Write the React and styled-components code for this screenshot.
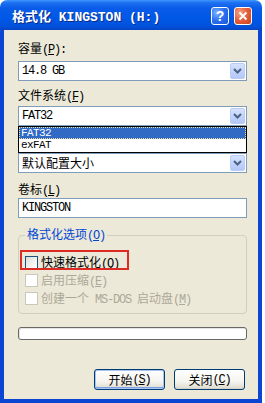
import React from "react";
import styled, { createGlobalStyle } from "styled-components";

const CJK = `"Noto Sans CJK SC", "Liberation Sans", sans-serif`;
const MONO = `"Liberation Mono", "Noto Sans CJK SC", monospace`;

const GlobalStyle = createGlobalStyle`
  html, body { margin: 0; padding: 0; background: #fff; }
  body { font-family: ${CJK}; font-size: 12px; }
`;

const Window = styled.div`
  width: 262px;
  display: flex;
  flex-direction: column;
`;

const TitleBar = styled.div`
  height: 30px;
  box-sizing: border-box;
  display: flex;
  align-items: center;
  padding: 1px 10px 0 12px;
  border-radius: 7px 7px 0 0;
  background: linear-gradient(
    180deg,
    #3d95ff 0px,
    #1d6ff0 3px,
    #0a5ce8 8px,
    #0058e6 18px,
    #0052dc 26px,
    #0843c4 30px
  );
`;

const Title = styled.div`
  flex: 1;
  color: #fff;
  font-family: ${MONO};
  font-size: 13px;
  font-weight: bold;
  white-space: pre;
  text-shadow: 1px 1px 0 #0c2a86;
`;

const TitleButton = styled.div`
  width: 18px;
  height: 18px;
  box-sizing: border-box;
  margin-left: ${({ $gap }) => $gap || 0}px;
  border: 1px solid #fff;
  border-radius: 3px;
  display: flex;
  align-items: center;
  justify-content: center;
  color: #fff;
  font-family: "Liberation Sans", sans-serif;
  font-weight: bold;
  font-size: 14px;
  background: ${({ $close }) =>
    $close
      ? "radial-gradient(circle at 30% 30%, #f2a58a 0%, #e6623c 45%, #c9401c 100%)"
      : "radial-gradient(circle at 30% 30%, #7fb2ff 0%, #2a6ff0 50%, #1a55d8 100%)"};
`;

const Body = styled.div`
  background: #ece9d8;
  border: 4px solid #0b45d4;
  border-top: none;
  padding: 11px 11px 9px 14px;
  display: flex;
  flex-direction: column;
`;

const Label = styled.div`
  margin-top: ${({ $mt }) => $mt || 0}px;
  line-height: 14px;
  height: 14px;
  color: #000;
  font-size: 12px;
  white-space: pre;
`;

const Mono = styled.span`
  font-family: ${MONO};
  font-size: 12px;
  letter-spacing: -1.2px;
  white-space: pre;
`;

const Key = styled.span`
  text-decoration: underline;
`;

const Hot = ({ k, tail = "" }) => (
  <Mono>
    (<Key>{k}</Key>){tail}
  </Mono>
);

const Field = styled.div`
  position: relative;
  margin-top: ${({ $mt }) => $mt || 0}px;
  height: 20px;
  box-sizing: border-box;
  border: 1px solid #7f9db9;
  background: #fff;
  display: flex;
  align-items: center;
  padding-left: 3px;
`;

const FieldText = styled.div`
  flex: 1;
  font-family: ${({ $mono }) => ($mono ? MONO : CJK)};
  font-size: 12px;
  letter-spacing: ${({ $mono }) => ($mono ? "-1.2px" : "0")};
  white-space: pre;
  color: #000;
  line-height: 18px;
`;

const ArrowButton = styled.div`
  width: 15px;
  height: 16px;
  margin-right: 1px;
  box-sizing: border-box;
  border: 1px solid #b9cbf6;
  border-radius: 2px;
  background: linear-gradient(180deg, #d6e2fd 0%, #c3d4fb 50%, #b4c8f8 100%);
  display: flex;
  align-items: center;
  justify-content: center;
`;

const List = styled.div`
  position: absolute;
  top: calc(100% + 1px);
  left: -1px;
  right: -1px;
  z-index: 2;
  border: 1px solid #000;
  background: #fff;
`;

const ListItem = styled.div`
  height: ${({ $h }) => $h || 12}px;
  line-height: ${({ $h }) => $h || 12}px;
  padding-left: 2px;
  font-family: ${MONO};
  font-size: 11px;
  letter-spacing: -0.6px;
  color: ${({ $selected }) => ($selected ? "#fff" : "#000")};
  background: ${({ $selected }) => ($selected ? "#316ac5" : "#fff")};
  outline: ${({ $selected }) => ($selected ? "1px dotted #e8e0a0" : "none")};
  outline-offset: -1px;
`;

const Group = styled.fieldset`
  margin: 9px 0 0;
  padding: 10px 0 6px 6px;
  border: 1px solid #d0d0bf;
  border-radius: 4px;
  min-width: 0;
`;

const Legend = styled.legend`
  padding: 0 2px;
  line-height: 14px;
  font-size: 12px;
  color: #0046d5;
`;

const Rows = styled.div`
  display: flex;
  flex-direction: column;
`;

const CheckRow = styled.div`
  position: relative;
  display: ${({ $highlight }) => ($highlight ? "inline-flex" : "flex")};
  align-self: flex-start;
  align-items: center;
  gap: 3px;
  height: 18px;
  font-size: 12px;
  color: ${({ $disabled }) => ($disabled ? "#aca899" : "#000")};

  ${({ $highlight }) =>
    $highlight &&
    `
    &::after {
      content: "";
      position: absolute;
      top: -3px;
      bottom: 1px;
      left: -5px;
      right: -10px;
      border: 2px solid #dd2a22;
    }
  `}
`;

const Checkbox = styled.div`
  width: 13px;
  height: 13px;
  box-sizing: border-box;
  border: 1px solid ${({ $disabled }) => ($disabled ? "#cac8bb" : "#1c5180")};
  background: ${({ $disabled }) =>
    $disabled ? "#fff" : "linear-gradient(135deg, #dcdcd7 0%, #f4f4f0 60%, #fff 100%)"};
`;

const Progress = styled.div`
  margin-top: 13px;
  height: 13px;
  box-sizing: border-box;
  border: 1px solid #686868;
  border-radius: 3px;
  background: #fff;
  box-shadow: inset 1px 1px 0 #e4e4e4;
`;

const ButtonRow = styled.div`
  margin-top: 29px;
  display: flex;
  justify-content: flex-end;
  gap: 9px;
  padding-right: 2px;
`;

const Button = styled.div`
  width: 71px;
  height: 21px;
  box-sizing: border-box;
  border: 1px solid #003c74;
  border-radius: 3px;
  display: flex;
  align-items: center;
  justify-content: center;
  font-size: 12px;
  color: #000;
  background: linear-gradient(180deg, #ffffff 0%, #f5f4ef 60%, #e3e1d6 90%, #d6d0c5 100%);
  box-shadow: ${({ $default }) =>
    $default ? "inset 0 0 0 1px #a8c4f0, inset 0 -1px 0 1px #7ea2e0" : "none"};
`;

const Chevron = () => (
  <svg width="9" height="6" viewBox="0 0 9 6">
    <path d="M1 1 L4.5 4.5 L8 1" fill="none" stroke="#4d6185" strokeWidth="2" />
  </svg>
);

const CloseGlyph = () => (
  <svg width="10" height="10" viewBox="0 0 10 10">
    <path d="M1.5 1.5 L8.5 8.5 M8.5 1.5 L1.5 8.5" stroke="#fff" strokeWidth="2" />
  </svg>
);

const Combo = ({ children, mono, mt, list }) => (
  <Field $mt={mt}>
    <FieldText $mono={mono}>{children}</FieldText>
    <ArrowButton>
      <Chevron />
    </ArrowButton>
    {list}
  </Field>
);

export default function App() {
  return (
    <>
      <GlobalStyle />
      <Window>
        <TitleBar>
          <Title>格式化 KINGSTON (H:)</Title>
          <TitleButton>?</TitleButton>
          <TitleButton $close $gap={5}>
            <CloseGlyph />
          </TitleButton>
        </TitleBar>
        <Body>
          <Label>
            容量<Hot k="P" tail=":" />
          </Label>
          <Combo mono mt={6}>
            14.8 GB
          </Combo>

          <Label $mt={7}>
            文件系统<Hot k="F" />
          </Label>
          <Combo
            mono
            mt={4}
            list={
              <List>
                <ListItem $selected>FAT32</ListItem>
                <ListItem $h={13}>exFAT</ListItem>
              </List>
            }
          >
            FAT32
          </Combo>

          {/* label of the allocation size combo sits under the open list */}
          <Label $mt={8} />
          <Combo mt={5}>默认配置大小</Combo>

          <Label $mt={9}>
            卷标<Hot k="L" />
          </Label>
          <Field $mt={2}>
            <FieldText $mono>KINGSTON</FieldText>
          </Field>

          <Group>
            <Legend>
              格式化选项<Hot k="O" />
            </Legend>
            <Rows>
              <CheckRow $highlight>
                <Checkbox />
                <span>
                  快速格式化<Hot k="Q" />
                </span>
              </CheckRow>
              <CheckRow $disabled>
                <Checkbox $disabled />
                <span>
                  启用压缩<Hot k="E" />
                </span>
              </CheckRow>
              <CheckRow $disabled>
                <Checkbox $disabled />
                <span>
                  创建一个<Mono> MS-DOS </Mono>启动盘<Hot k="M" />
                </span>
              </CheckRow>
            </Rows>
          </Group>

          <Progress />

          <ButtonRow>
            <Button $default>
              开始<Hot k="S" />
            </Button>
            <Button>
              关闭<Hot k="C" />
            </Button>
          </ButtonRow>
        </Body>
      </Window>
    </>
  );
}
